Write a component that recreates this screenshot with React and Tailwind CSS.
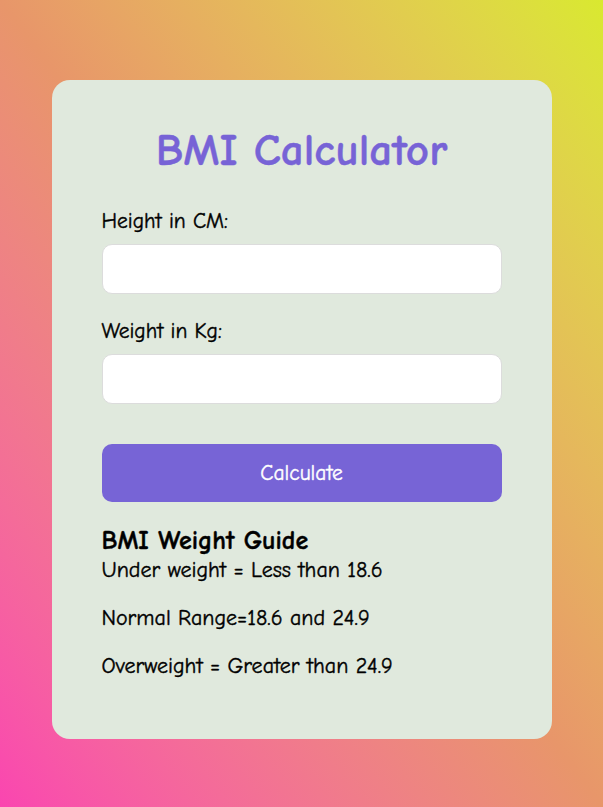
const font = "font-['Comic_Sans_MS','Comic_Neue','DejaVu_Sans',sans-serif]";
const ink = "[-webkit-text-stroke:0.4px_currentColor]";

const Field = ({ label, top }) => (
    <div className={`flex flex-col ${top}`}>
        <label className={`text-[21.5px] leading-[28px] text-black ${ink}`}>{label}</label>
        <input
            type="text"
            className="mt-[9px] h-[50px] w-full rounded-[10px] border border-[#dcdcdc] bg-white px-3 text-[18px] outline-none"
        />
    </div>
);

export default function App() {
    return (
        <div className={`min-h-[807px] w-full bg-linear-to-tr from-[#fa45b0] via-[#e8966a] to-[#d9e92f] pt-[80px] ${font}`}>
            <div className="mx-auto flex w-[500px] flex-col rounded-[18px] bg-[#e0e9dd] px-[50px] pt-[44px] pb-[59px]">
                <h1 className={`text-center text-[45px] font-bold leading-[52px] text-[#7763d6] ${ink}`}>BMI Calculator</h1>

                <Field label="Height in CM:" top="mt-[31px]" />
                <Field label="Weight in Kg:" top="mt-[23px]" />

                <button className={`mt-[40px] h-[58px] w-full rounded-[10px] bg-[#7764d6] text-[21.5px] text-white ${ink}`}>
                    Calculate
                </button>

                <div className={`mt-[24px] flex flex-col text-black ${ink}`}>
                    <h3 className="text-[26px] font-bold leading-[30px]">BMI Weight Guide</h3>
                    <p className="text-[22px] leading-[28px]">Under weight = Less than 18.6</p>
                    <p className="mt-[20px] text-[22px] leading-[28px]">Normal Range=18.6 and 24.9</p>
                    <p className="mt-[20px] text-[22px] leading-[28px]">Overweight = Greater than 24.9</p>
                </div>
            </div>
        </div>
    );
}
